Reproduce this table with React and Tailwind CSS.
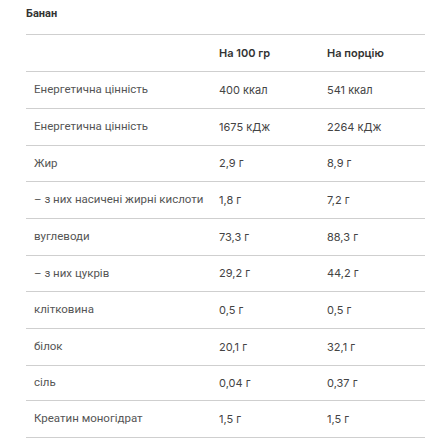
const rows = [
  ["Енергетична цінність", "400 ккал", "541 ккал", "h-[36px]"],
  ["Енергетична цінність", "1675 кДж", "2264 кДж", "h-[36px]"],
  ["Жир", "2,9 г", "8,9 г", "h-[35px]"],
  ["– з них насичені жирні кислоти", "1,8 г", "7,2 г", "h-[36px]"],
  ["вуглеводи", "73,3 г", "88,3 г", "h-[36px]"],
  ["– з них цукрів", "29,2 г", "44,2 г", "h-[35px]"],
  ["клітковина", "0,5 г", "0,5 г", "h-[36px]"],
  ["білок", "20,1 г", "32,1 г", "h-[36px]"],
  ["сіль", "0,04 г", "0,37 г", "h-[34px]"],
  ["Креатин моногідрат", "1,5 г", "1,5 г", "h-[36px]"],
];

const Line = () => <div className="h-[1px] w-full shrink-0 bg-[#cfcfcf]" />;

const App = () => {
  return (
    <div className="w-[428px] h-[446px] bg-white pl-[26px] pt-[7px] overflow-hidden">
      <div className="text-[11px] leading-[14px] font-bold text-[#333]" style={{ fontFamily: "Roboto, sans-serif" }}>
        Банан
      </div>
      <div className="mt-[13px] w-[399px] flex flex-col">
        <Line />
        <div className="flex h-[36px] items-center text-[11px] font-semibold text-[#333]" style={{ fontFamily: "Inter, sans-serif" }}>
          <div className="w-[185px] pl-2"></div>
          <div className="w-[108px] pl-2">На 100 гр</div>
          <div className="flex-1 pl-2">На порцію</div>
        </div>
        {rows.map((r, i) => (
          <div key={i} className="flex flex-col">
            <Line />
            <div className={`flex items-center ${r[3]}`}>
              <div className="w-[185px] pl-2 text-[11.5px] text-[#555]" style={{ fontFamily: "Roboto, sans-serif" }}>{r[0]}</div>
              <div className="w-[108px] pl-2 text-[11px] text-[#444]" style={{ fontFamily: "Inter, sans-serif" }}>{r[1]}</div>
              <div className="flex-1 pl-2 text-[11px] text-[#444]" style={{ fontFamily: "Inter, sans-serif" }}>{r[2]}</div>
            </div>
          </div>
        ))}
        <Line />
      </div>
    </div>
  );
};

export default App;
